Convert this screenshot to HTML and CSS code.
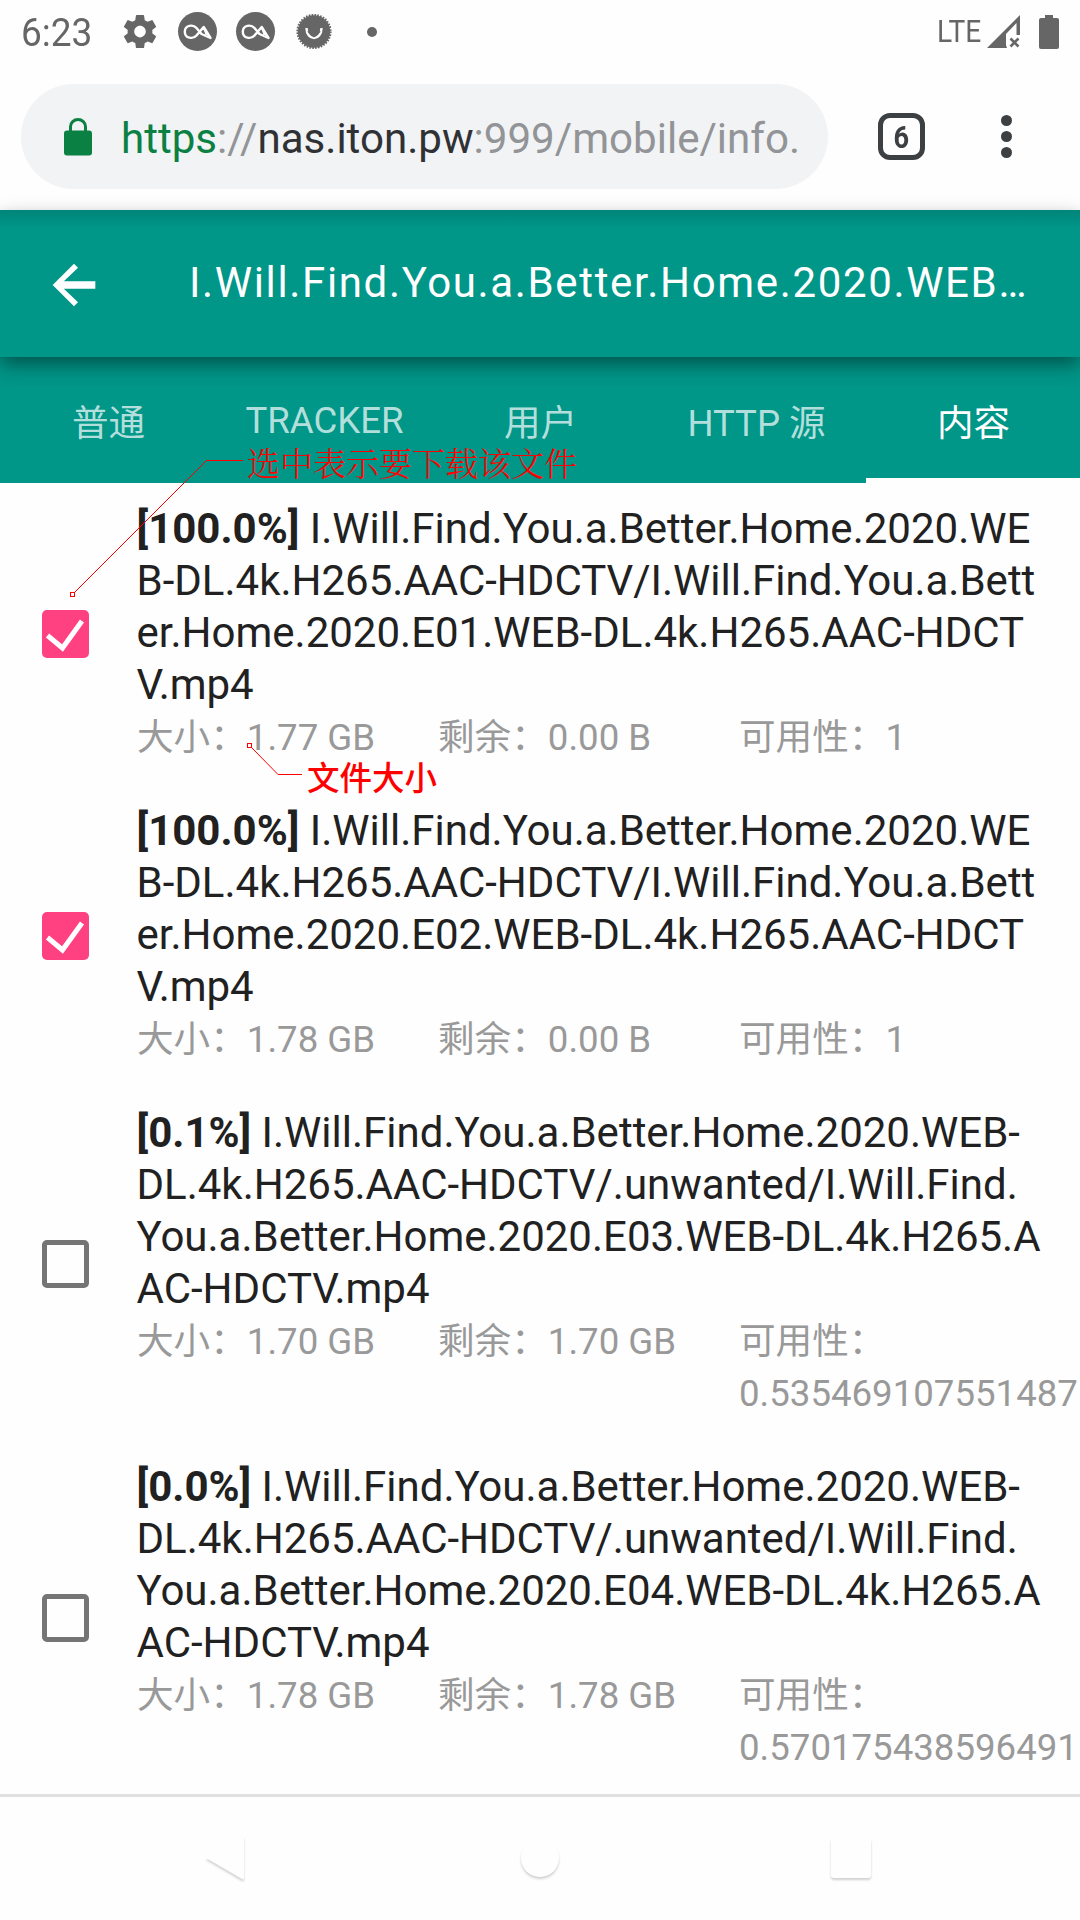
FILE: index.html
```html
<!DOCTYPE html>
<html lang="zh-CN">
<head>
<meta charset="utf-8">
<title>内容</title>
<link rel="stylesheet" href="styles.css">
</head>
<body>
<div class="screen">
  <div class="status">
    <span class="clock"><span>6:23</span></span>
    <svg class="status-icons" width="270" height="63" viewBox="0 0 270 63">
      <g fill="#666">
        <path transform="translate(20.2 11.8) scale(1.65)" d="M19.43 12.98c.04-.32.07-.64.07-.98s-.03-.66-.07-.98l2.11-1.65c.19-.15.24-.42.12-.64l-2-3.46c-.12-.22-.39-.3-.61-.22l-2.49 1c-.52-.4-1.08-.73-1.69-.98l-.38-2.65C14.46 2.18 14.25 2 14 2h-4c-.25 0-.46.18-.49.42l-.38 2.65c-.61.25-1.17.59-1.69.98l-2.49-1c-.23-.09-.49 0-.61.22l-2 3.46c-.13.22-.07.49.12.64l2.11 1.65c-.04.32-.07.65-.07.98s.03.66.07.98l-2.11 1.65c-.19.15-.24.42-.12.64l2 3.46c.12.22.39.3.61.22l2.49-1c.52.4 1.08.73 1.69.98l.38 2.65c.03.24.24.42.49.42h4c.25 0 .46-.18.49-.42l.38-2.65c.61-.25 1.17-.59 1.69-.98l2.49 1c.23.09.49 0 .61-.22l2-3.46c.12-.22.07-.49-.12-.64l-2.11-1.65zM12 15.5c-1.93 0-3.5-1.57-3.5-3.5s1.57-3.5 3.5-3.5 3.5 1.57 3.5 3.5-1.57 3.5-3.5 3.5z"/>
        <circle cx="97.5" cy="31.5" r="19.5"/>
        <circle cx="155.5" cy="31.5" r="19.5"/>
        <circle cx="214" cy="31.5" r="16.2"/>
      </g>
      <circle cx="214" cy="31.5" r="16.4" fill="none" stroke="#666" stroke-width="2.4" stroke-dasharray="1.6 1.26"/>
      <g fill="none" stroke="#fff" stroke-width="2.4" stroke-linejoin="round">
        <g id="ca"><path d="M103.700 27L96.500 35.500C93 39.500 84.800 38.500 84.800 31.700C84.800 25 93 24 96.500 28L101.500 34L110.500 38L103.700 27L107 35"/></g>
        <use href="#ca" x="58"/>
        <path d="M206.500 28c0 13.500 15 13.500 15 0"/>
      </g>
      <path fill="#666" d="M210 25h8v6.500h3l-7 6-7-6h3z"/>
    </svg>
    <span class="dot"></span>
    <span class="lte">LTE</span>
    <svg width="80" height="40" viewBox="984 11 80 40">
      <path fill="#666" fill-rule="evenodd" d="M987 47l33-33v20h-3.500V22L1006 33v11l1 3z"/>
      <path d="M1010.500 37.500l8 8m0-8l-8 8" stroke="#666" stroke-width="2.600"/>
      <path fill="#666" d="M1045 14h8v3h4q2 0 2 2v27q0 2-2 2h-16q-2 0-2-2V19q0-2 2-2h4z"/>
    </svg>
  </div>

  <div class="browser">
    <div class="omnibox">
      <svg width="28" height="38" viewBox="0 0 28 38"><rect y="12.500" width="28" height="25" rx="3" fill="#0b8043"/><path d="M6.500 14V8.500a7.500 7 0 0 1 15 0V14" fill="none" stroke="#0b8043" stroke-width="3"/></svg>
      <span class="url"><b>https</b>://<i>nas.iton.pw</i>:999/mobile/info.</span>
    </div>
    <div class="tabcount"><span>6</span></div>
    <div class="menu"><i></i><i></i><i></i></div>
  </div>

  <div class="appbar">
    <svg width="64" height="64" viewBox="0 0 24 24"><path fill="#fff" d="M20 10.600H8.200l5.300-5.100L12 4l-8 8 8 8 1.500-1.500-5.300-5.100H20z"/></svg>
    <span class="title">I.Will.Find.You.a.Better.Home.2020.WEB…</span>
  </div>

  <div class="tabs">
    <span class="cjk">普通</span><span>TRACKER</span><span class="cjk">用户</span><span class="cjk">HTTP 源</span><span class="cjk active">内容</span>
  </div>

  <div class="list">
    <div class="item">
      <div class="check on"><svg width="47" height="48" viewBox="0 0 47 48"><path d="M5.500 25.500l15 12.500L40 11" fill="none" stroke="#fff" stroke-width="5"/></svg></div>
      <div class="body">
        <div class="name"><b>[100.0%]</b> I.Will.Find.You.a.Better.Home.2020.WE<br>B-DL.4k.H265.AAC-HDCTV/I.Will.Find.You.a.Bett<br>er.Home.2020.E01.WEB-DL.4k.H265.AAC-HDCT<br>V.mp4</div>
        <div class="meta"><span>大小：1.77 GB</span><span>剩余：0.00 B</span><span>可用性：1</span></div>
      </div>
    </div>
    <div class="item">
      <div class="check on"><svg width="47" height="48" viewBox="0 0 47 48"><path d="M5.500 25.500l15 12.500L40 11" fill="none" stroke="#fff" stroke-width="5"/></svg></div>
      <div class="body">
        <div class="name"><b>[100.0%]</b> I.Will.Find.You.a.Better.Home.2020.WE<br>B-DL.4k.H265.AAC-HDCTV/I.Will.Find.You.a.Bett<br>er.Home.2020.E02.WEB-DL.4k.H265.AAC-HDCT<br>V.mp4</div>
        <div class="meta"><span>大小：1.78 GB</span><span>剩余：0.00 B</span><span>可用性：1</span></div>
      </div>
    </div>
    <div class="item">
      <div class="check"></div>
      <div class="body">
        <div class="name"><b>[0.1%]</b> I.Will.Find.You.a.Better.Home.2020.WEB-<br>DL.4k.H265.AAC-HDCTV/.unwanted/I.Will.Find.<br>You.a.Better.Home.2020.E03.WEB-DL.4k.H265.A<br>AC-HDCTV.mp4</div>
        <div class="meta"><span>大小：1.70 GB</span><span>剩余：1.70 GB</span><span>可用性：<br>0.535469107551487</span></div>
      </div>
    </div>
    <div class="item">
      <div class="check"></div>
      <div class="body">
        <div class="name"><b>[0.0%]</b> I.Will.Find.You.a.Better.Home.2020.WEB-<br>DL.4k.H265.AAC-HDCTV/.unwanted/I.Will.Find.<br>You.a.Better.Home.2020.E04.WEB-DL.4k.H265.A<br>AC-HDCTV.mp4</div>
        <div class="meta"><span>大小：1.78 GB</span><span>剩余：1.78 GB</span><span>可用性：<br>0.570175438596491</span></div>
      </div>
    </div>
  </div>

  <div class="navbar">
    <svg width="1080" height="123" viewBox="0 0 1080 123" fill="#fefefe">
      <path d="M206 61l36-21q2-1 2 1v40q0 2-2 1z"/>
      <circle cx="540" cy="61" r="19"/>
      <rect x="831" y="41" width="40" height="40" rx="3"/>
    </svg>
  </div>

  <svg class="lines" width="320" height="340" viewBox="0 450 320 340" fill="none" stroke="#f00">
    <path d="M75 592L206.500 460.500"/><path d="M206 460.500h37"/><rect x="70.500" y="592.500" width="4" height="4"/>
    <path d="M252 748l26 26.500"/><path d="M278 774.500h24"/><rect x="247.500" y="743.500" width="4" height="4"/>
  </svg>
  <span class="note note-select">选中表示要下载该文件</span>
  <span class="note note-size">文件大小</span>
</div>
</body>
</html>
```
FILE: styles.css
```css
* { box-sizing: border-box; }
body { margin: 0; background: #fefefe; font-family: Roboto, "Noto Sans CJK SC", sans-serif; }
.screen { position: relative; width: 1080px; height: 1920px; overflow: hidden; display: flex; flex-direction: column; white-space: nowrap; }

.status { height: 63px; flex: none; display: flex; align-items: center; padding: 0 16px 0 21px; color: #666; }
.clock { width: 79px; font-size: 38px; line-height: 45px; padding-top: 4px; }
.clock span { display: inline-block; transform: scaleX(.975); transform-origin: left; }
.status-icons { flex: none; overflow: hidden; }
.dot { width: 10px; height: 10px; border-radius: 50%; background: #666; margin-left: -3px; }
.lte { margin-left: auto; margin-right: 3px; font-size: 32px; line-height: 40px; padding-bottom: 1px; transform: scaleX(.88); transform-origin: right; }

.browser { height: 147px; flex: none; display: flex; align-items: center; padding: 0 0 0 21px; }
.omnibox { width: 807px; height: 105px; border-radius: 53px; background: #f1f3f4; display: flex; align-items: center; padding-left: 43px; }
.url { margin-left: 29px; font-size: 42.1px; line-height: 50px; color: #929497; padding-top: 4px; }
.url b { font-weight: 400; color: #0b8043; }
.url i { font-style: normal; color: #303134; }
.tabcount { width: 47px; height: 47px; margin-left: 50px; border: 5px solid #3c4043; border-radius: 12px; display: flex; align-items: center; justify-content: center; color: #3c4043; font-size: 32px; font-weight: 700; }
.tabcount span { transform: scaleX(.85); }
.menu { margin-left: 76px; display: flex; flex-direction: column; gap: 5px; }
.menu i { width: 11px; height: 11px; border-radius: 50%; background: #3c4043; }

.appbar { height: 147px; flex: none; position: relative; z-index: 1; background: #009688; display: flex; align-items: center; padding-left: 42px; padding-top: 2px; color: #fff; background-image: linear-gradient(#00857a, #009688 18px); box-shadow: 0 8px 18px rgba(0,0,0,.42); }
.title { margin-left: 83px; font-size: 42px; letter-spacing: 1.65px; padding-bottom: 4px; }
.tabs { height: 126px; flex: none; display: grid; grid-template-columns: repeat(5, 1fr); background: #009688; font-size: 36.6px; line-height: 42px; text-align: center; color: #b2dfdb; }
.tabs span { padding-top: 43px; padding-left: 1px; }
.tabs .cjk { padding-top: 46px; }
.tabs .active { color: #fff; border-bottom: 5px solid #fefefe; margin-left: 2px; }

.list { height: 1311px; flex: none; }
.item { display: flex; align-items: center; padding: 20px 0 22px 42px; }
.check { width: 47px; height: 48px; flex: none; margin-top: 2px; border: 5px solid #757575; border-radius: 5px; }
.check.on { border: 0; background: #ff4081; }
.check svg { display: block; }
.body { margin-left: 48px; }
.name { height: 208px; margin-left: -.5px; font-size: 42px; line-height: 52px; color: #212121; }
.meta { display: grid; grid-template-columns: repeat(3, 301px); margin: 1px 0 -1px; font-size: 36.62px; line-height: 52px; color: #999; }

.navbar { height: 126px; flex: none; border-top: 3px solid #e0e0e0; }
.navbar svg { display: block; filter: drop-shadow(0 2px 1px rgba(0,0,0,.18)); }

.lines { position: absolute; left: 0; top: 450px; z-index: 2; }
.note { position: absolute; z-index: 2; color: #f00; }
.note-select { left: 247px; top: 445px; font: 300 33px/34px "Noto Serif CJK SC", "Noto Sans CJK SC", serif; }
.note-size { left: 307px; top: 759px; font: 500 32.500px/34px "Noto Sans CJK SC", sans-serif; }
```
